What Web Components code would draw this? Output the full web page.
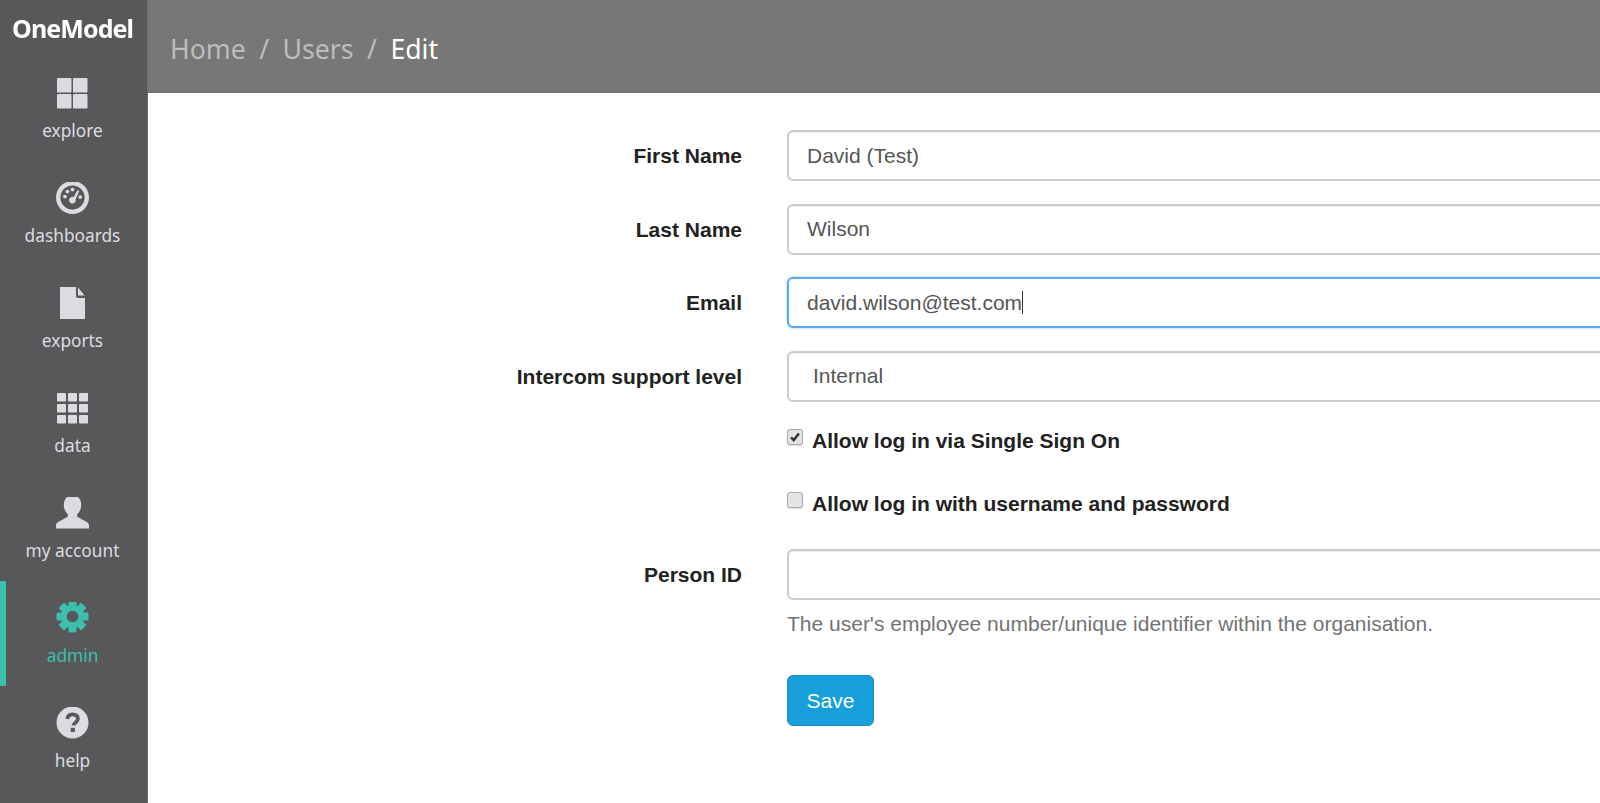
<!DOCTYPE html>
<html lang="en">
<head>
<meta charset="utf-8">
<title>Edit user</title>
<style>
  html, body { margin: 0; height: 100%; overflow: hidden; background: #fff; }
  body { display: flex; font-family: "Liberation Sans", Arial, sans-serif; }
</style>
</head>
<body>
<app-sidebar>
  <nav-item label="explore"><svg viewBox="0 -0.500 33 33"><rect x="1" y="0.500" width="14.500" height="14.500" rx="1"/><rect x="17" y="0.500" width="14.500" height="14.500" rx="1"/><rect x="1" y="16.500" width="14.500" height="14.500" rx="1"/><rect x="17" y="16.500" width="14.500" height="14.500" rx="1"/></svg></nav-item>
  <nav-item label="dashboards"><svg viewBox="0 1 34 34"><path fill-rule="evenodd" d="M17 0a17 17 0 1 0 0 34a17 17 0 1 0 0-34zM17 4.500a12.500 12.500 0 1 1 0 25a12.500 12.500 0 1 1 0-25z"/><circle cx="9.200" cy="16" r="1.900"/><circle cx="11.800" cy="10.800" r="1.900"/><circle cx="17" cy="8.800" r="1.900"/><circle cx="25" cy="16.500" r="1.900"/><path d="M22 9.400l2 .9-3.800 8.600a3.400 3.400 0 1 1-5.400-1.800a3.400 3.400 0 0 1 3.500-.6z"/></svg></nav-item>
  <nav-item label="exports"><svg viewBox="0 1 33 33"><path d="M4 0h16v10a2 2 0 0 0 2 2h7v21h-25z"/><path d="M22 1.500l6.500 8h-6.500z"/></svg></nav-item>
  <nav-item label="data"><svg viewBox="0 -0.500 33 33"><rect x="1" y="0.500" width="9" height="8.500" rx="1"/><rect x="12" y="0.500" width="9" height="8.500" rx="1"/><rect x="23" y="0.500" width="9" height="8.500" rx="1"/><rect x="1" y="11.500" width="9" height="8.500" rx="1"/><rect x="12" y="11.500" width="9" height="8.500" rx="1"/><rect x="23" y="11.500" width="9" height="8.500" rx="1"/><rect x="1" y="22.500" width="9" height="8.500" rx="1"/><rect x="12" y="22.500" width="9" height="8.500" rx="1"/><rect x="23" y="22.500" width="9" height="8.500" rx="1"/></svg></nav-item>
  <nav-item label="my account"><svg viewBox="0 1.500 34 34"><path d="M17 0c5.500 0 9 3.700 9 9.500c0 4-1.700 7.500-4.200 9.700c-.4 1.800.2 2.800 1.500 3.500l8 4.300c1.700.9 2.700 2 2.700 3.500v3.500h-34v-3.500c0-1.500 1-2.600 2.700-3.500l8-4.300c1.300-.7 1.900-1.700 1.500-3.500c-2.500-2.200-4.200-5.700-4.200-9.700c0-5.800 3.500-9.500 9-9.500z"/></svg></nav-item>
  <nav-item label="admin" active><svg viewBox="-0.500 1.500 33 33"><circle cx="16" cy="16" r="8.500" fill="none" stroke="currentColor" stroke-width="6"/><rect x="12" y="0" width="8" height="32" rx="1.500"/><rect x="12" y="0" width="8" height="32" rx="1.500" transform="rotate(45 16 16)"/><rect x="12" y="0" width="8" height="32" rx="1.500" transform="rotate(90 16 16)"/><rect x="12" y="0" width="8" height="32" rx="1.500" transform="rotate(135 16 16)"/><circle cx="16" cy="16" r="5.800" fill="#58585a"/></svg></nav-item>
  <nav-item label="help"><svg viewBox="-0.500 0.500 33 33"><circle cx="16" cy="16" r="16"/><path d="M10.800 12.500c.3-3 2.500-4.700 5.400-4.700c3 0 5.200 1.800 5.200 4.400c0 3.700-4.300 3.600-4.300 6.800" fill="none" stroke="#58585a" stroke-width="3.800"/><rect x="14.200" y="21.300" width="4.200" height="4.200" fill="#58585a"/></svg></nav-item>
</app-sidebar>
<main-panel>
  <page-header slot="header"><span>Home</span><span>Users</span><span>Edit</span></page-header>
  <user-form>
    <text-field label="First Name" value="David (Test)"></text-field>
    <text-field label="Last Name" value="Wilson"></text-field>
    <text-field label="Email" value="david.wilson@test.com" focused></text-field>
    <text-field label="Intercom support level" value="Internal" select></text-field>
    <check-field label="Allow log in via Single Sign On" checked></check-field>
    <check-field label="Allow log in with username and password"></check-field>
    <text-field label="Person ID" value="" help="The user's employee number/unique identifier within the organisation."></text-field>
    <save-button>Save</save-button>
  </user-form>
</main-panel>
<script>
class AppSidebar extends HTMLElement {
  constructor() {
    super();
    this.attachShadow({ mode: "open" }).innerHTML = `
      <style>
        :host { display: block; flex: 0 0 148px; box-sizing: border-box; border-right: 1px solid #6a6a6c; background: #58585a; font-family: "Noto Sans", sans-serif; }
        .logo { height: 56px; box-sizing: border-box; padding: 12px 0 0 12px; color: #fff; font-size: 25px; line-height: 33px; font-weight: 700; letter-spacing: -0.9px; filter: blur(0.4px); }
      </style>
      <div class="logo">OneModel</div>
      <slot></slot>`;
  }
}

class NavItem extends HTMLElement {
  constructor() {
    super();
    this.attachShadow({ mode: "open" }).innerHTML = `
      <style>
        :host { display: flex; flex-direction: column; align-items: center; height: 105px; box-sizing: border-box; padding: 20px 2px 0 0; color: #dcdce0; position: relative; }
        :host([active]) { color: #3dbfad; }
        :host([active])::before { content: ""; position: absolute; left: 0; top: 0; bottom: 0; width: 6px; background: #3dbfad; }
        .icon { height: 34px; display: flex; align-items: center; justify-content: center; }
        ::slotted(svg) { width: 33px; height: 33px; fill: currentColor; display: block; }
        .label { margin-top: 9px; font-size: 17.300px; line-height: 24px; }
      </style>
      <div class="icon"><slot></slot></div>
      <div class="label"></div>`;
  }
  connectedCallback() {
    this.shadowRoot.querySelector(".label").textContent = this.getAttribute("label");
  }
}

class MainPanel extends HTMLElement {
  constructor() {
    super();
    this.attachShadow({ mode: "open" }).innerHTML = `
      <style>
        :host { display: block; flex: 1; min-width: 0; overflow: hidden; }
      </style>
      <slot name="header"></slot>
      <slot></slot>`;
  }
}

class PageHeader extends HTMLElement {
  constructor() {
    super();
    this.attachShadow({ mode: "open" }).innerHTML = `
      <style>
        :host { display: flex; align-items: center; height: 93px; box-sizing: border-box; padding: 5px 0 0 22px; background: #777; border-bottom: 1px solid #6f6f6f; color: #bdbdbd; font: 26.600px/38px "Noto Sans", sans-serif; }
        ::slotted(span:not(:first-child))::before { content: "/"; padding: 0 13.500px; color: #bdbdbd; }
        ::slotted(span:last-child) { color: #fff; }
      </style>
      <slot></slot>`;
  }
}

class UserForm extends HTMLElement {
  constructor() {
    super();
    this.attachShadow({ mode: "open" }).innerHTML = `
      <style>
        :host { display: flex; flex-direction: column; padding-top: 37px; color: #222; font-size: 21px; }
      </style>
      <slot></slot>`;
  }
}

// label column + field column, shared by every row of the form
const rowStyles = `
  :host { display: grid; grid-template-columns: 594px minmax(0, 1fr); column-gap: 45px; }
  .name { font-weight: 700; text-align: right; color: #222; }
`;

class TextField extends HTMLElement {
  constructor() {
    super();
    this.attachShadow({ mode: "open" });
  }
  connectedCallback() {
    const value = this.getAttribute("value") || "";
    const help = this.getAttribute("help");
    this.shadowRoot.innerHTML = `
      <style>
        ${rowStyles}
        :host { margin-bottom: 22.500px; }
        :host([help]) { margin-bottom: 38px; }
        .name { line-height: 51px; }
        .box { height: 51px; box-sizing: border-box; margin-right: -20px; padding: 0 18px; display: flex; align-items: center; border: 2px solid #ccc; border-radius: 6px; color: #555; white-space: pre; box-shadow: inset 0 1px 1px rgba(0,0,0,.075); }
        :host([select]) .box { padding-left: 24px; }
        :host([focused]) .box { border-color: #5aa9ee; box-shadow: 0 0 3px rgba(90,169,238,.6); }
        .caret { width: 1px; height: 23px; background: #333; }
        .help { margin-top: 11px; color: #737373; line-height: 26px; }
      </style>
      <div class="name">${this.getAttribute("label")}</div>
      <div>
        <div class="box"><span>${value}</span>${this.hasAttribute("focused") ? '<span class="caret"></span>' : ""}</div>
        ${help ? `<div class="help">${help}</div>` : ""}
      </div>`;
  }
}

class CheckField extends HTMLElement {
  constructor() {
    super();
    this.attachShadow({ mode: "open" });
  }
  connectedCallback() {
    const tick = this.hasAttribute("checked")
      ? '<svg viewBox="0 0 16 16"><path d="M3.500 8.500l3 3 6-7.500" fill="none" stroke="#333" stroke-width="2.800"/></svg>'
      : "";
    this.shadowRoot.innerHTML = `
      <style>
        ${rowStyles}
        :host { height: 62.500px; }
        .field { display: flex; align-items: flex-start; gap: 9px; padding-top: 4px; font-weight: 700; line-height: 26px; }
        .check { width: 16px; height: 16px; margin-top: 1px; box-sizing: border-box; border: 1px solid #aaa; border-radius: 3px; background: #e4e4e4; box-shadow: 0 1px 1px rgba(0,0,0,.15); flex: none; }
        .check svg { display: block; width: 14px; height: 14px; }
      </style>
      <div></div>
      <div class="field"><span class="check">${tick}</span><span>${this.getAttribute("label")}</span></div>`;
  }
}

class SaveButton extends HTMLElement {
  constructor() {
    super();
    this.attachShadow({ mode: "open" }).innerHTML = `
      <style>
        ${rowStyles}
        .btn { width: 87px; height: 51px; box-sizing: border-box; display: flex; align-items: center; justify-content: center; background: #169fdb; border: 1px solid #1a8ec4; border-radius: 6px; color: #fff; }
      </style>
      <div></div>
      <div class="btn"><slot></slot></div>`;
  }
}

customElements.define("app-sidebar", AppSidebar);
customElements.define("nav-item", NavItem);
customElements.define("main-panel", MainPanel);
customElements.define("page-header", PageHeader);
customElements.define("user-form", UserForm);
customElements.define("text-field", TextField);
customElements.define("check-field", CheckField);
customElements.define("save-button", SaveButton);
</script>
</body>
</html>
